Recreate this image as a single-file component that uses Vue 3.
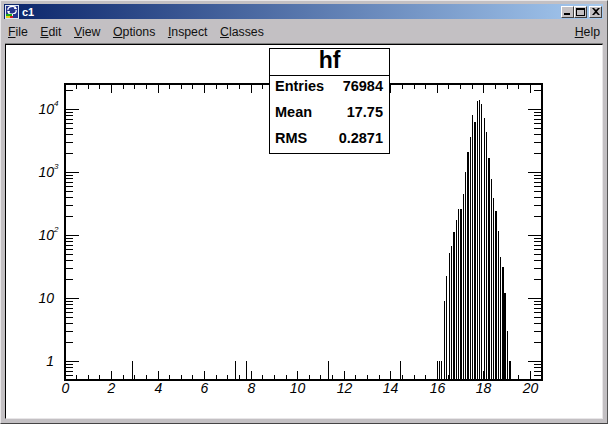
<template>
  <div class="window">
    <div class="titlebar">
      <svg class="appicon" width="14" height="14" viewBox="0 0 14 14">
        <rect width="14" height="14" fill="#dfe6f2" />
        <rect x="1" y="1" width="12" height="8" fill="#24348c" />
        <path d="M3 5a4 3 0 0 1 8-1M11 5a4 3 0 0 1-8 2" fill="none" stroke="#fff" stroke-width="1.3" />
        <path d="M10 1l2 3h-3zM4 9L2 6h3z" fill="#fff" />
        <rect x="1" y="9" width="6" height="2" fill="#18a818" />
        <rect x="1" y="11" width="4" height="2" fill="#e8d020" />
        <rect x="5" y="11" width="3" height="2" fill="#d02020" />
        <rect x="8" y="9" width="5" height="4" fill="#24348c" />
      </svg>
      <span class="wintitle">c1</span>
      <div class="winbuttons">
        <button class="winbtn">
          <svg width="8" height="7" viewBox="0 0 8 7"><rect x="0" y="5" width="6" height="2" fill="#000" /></svg>
        </button>
        <button class="winbtn">
          <svg width="9" height="8" viewBox="0 0 9 8"><path d="M0 0h9v8H0zM1 2v5h7V2z" fill="#000" fill-rule="evenodd" /></svg>
        </button>
        <button class="winbtn closebtn">
          <svg width="8" height="7" viewBox="0 0 8 7"><path d="M0 0h2l2 2 2-2h2L5 3.500 8 7H6L4 5 2 7H0l3-3.500z" fill="#000" /></svg>
        </button>
      </div>
    </div>

    <div class="menubar">
      <span v-for="m in menus" :key="m" class="menuitem"><u>{{ m[0] }}</u>{{ m.slice(1) }}</span>
      <span class="menuitem helpitem"><u>H</u>elp</span>
    </div>

    <div class="canvas">
      <svg class="plot" width="596" height="373" viewBox="6 45 596 373">
        <rect v-for="(b, i) in bars" :key="'b' + i" :x="b.x" :y="b.top" :width="b.w" :height="380 - b.top" fill="#000" />
        <rect v-for="(t, i) in xTicks" :key="'x' + i" :x="t.x" :y="380 - t.len" width="1" :height="t.len" fill="#000" />
        <rect v-for="(t, i) in xTicks" :key="'xt' + i" :x="t.x" y="84" width="1" :height="t.len" fill="#000" />
        <rect v-for="(t, i) in yTicks" :key="'y' + i" x="65" :y="t.y" :width="t.len" height="1" fill="#000" />
        <rect v-for="(t, i) in yTicks" :key="'yr' + i" :x="542 - t.len" :y="t.y" :width="t.len" height="1" fill="#000" />
        <rect x="64" y="83" width="2" height="298" fill="#000" />
        <rect x="541" y="83" width="2" height="298" fill="#000" />
        <rect x="64" y="83" width="479" height="2" fill="#000" />
        <rect x="64" y="379" width="479" height="2" fill="#000" />

        <text v-for="l in xLabels" :key="l.t" :x="l.x" y="393" class="ticklabel" text-anchor="middle">{{ l.t }}</text>
        <text x="54" y="366" class="ticklabel" text-anchor="end">1</text>
        <text x="54" y="303" class="ticklabel" text-anchor="end">10</text>
        <template v-for="l in powLabels" :key="l.exp">
          <text x="54" :y="l.y" class="ticklabel" text-anchor="end">10</text>
          <text x="54" :y="l.y - 8" class="powlabel">{{ l.exp }}</text>
        </template>
      </svg>

      <div class="stats">
        <div class="statstitle">hf</div>
        <div class="statsbody">
          <div v-for="s in stats" :key="s.k" class="statrow">
            <span>{{ s.k }}</span><span>{{ s.v }}</span>
          </div>
        </div>
      </div>
    </div>
  </div>
</template>

<script setup>
const menus = ["File", "Edit", "View", "Options", "Inspect", "Classes"];

const stats = [
  { k: "Entries", v: "76984" },
  { k: "Mean", v: "17.75" },
  { k: "RMS", v: "0.2871" },
];

// x, top, width read off the reference, histogram is not evenly rounded
const bars = [
  [132, 361], [235, 361], [246, 361], [328, 361], [400, 361],
  [437, 361], [439, 361], [441, 361], [444, 301], [446, 276],
  [449, 253], [451, 246], [453, 232, 2], [456, 220], [458, 209],
  [460, 209, 2], [463, 194], [465, 172], [467, 152, 2], [470, 137],
  [472, 115], [474, 122, 2], [477, 101], [479, 100], [481, 104],
  [484, 118], [486, 132], [488, 158, 2], [491, 179], [493, 198],
  [495, 211, 2], [498, 231], [500, 257], [502, 267, 2], [504, 293, 2],
  [507, 331], [509, 361, 2],
].map(([x, top, w]) => ({ x, top, w: w || 1 }));

const xpos = (v) => Math.floor(65 + 23.27 * v);

const xTicks = [];
for (let i = 1; i <= 40; i++) {
  xTicks.push({ x: xpos(i / 2), len: i % 4 === 0 ? 9 : 5 });
}

const xLabels = [0, 2, 4, 6, 8, 10, 12, 14, 16, 18, 20].map((v) => ({
  t: v,
  x: xpos(v) + 0.5,
}));

const yTicks = [];
for (let dec = -1; dec <= 4; dec++) {
  for (let m = 1; m <= 9; m++) {
    const y = Math.round(361 - 63 * (dec + Math.log10(m)));
    if (y < 85 || y > 378) continue;
    yTicks.push({ y, len: m === 1 ? 14 : 8 });
  }
}

const powLabels = [
  { exp: 2, y: 240 },
  { exp: 3, y: 177 },
  { exp: 4, y: 114 },
];
</script>

<style>
body {
  background: #c3c0c3;
}
</style>

<style scoped>
.window {
  width: 608px;
  height: 424px;
  box-sizing: border-box;
  display: flex;
  flex-direction: column;
  background: #c3c0c3;
  padding: 3px 4px 4px 4px;
  border-top: 1px solid #e8e6e8;
  border-left: 1px solid #e8e6e8;
  border-right: 1px solid #555;
  border-bottom: 1px solid #444;
  font-family: "Liberation Sans", Arial, sans-serif;
}
.titlebar {
  height: 15px;
  flex: none;
  display: flex;
  align-items: center;
  background: linear-gradient(to right, #0a246a, #a6caf0);
  margin-left: -1px;
}
.appicon {
  margin-left: 1px;
}
.wintitle {
  margin-left: 3px;
  color: #fff;
  font-weight: bold;
  font-size: 11px;
}
.winbuttons {
  margin-left: auto;
  display: flex;
  margin-right: 1px;
}
.winbtn {
  width: 13px;
  height: 12px;
  padding: 0;
  box-sizing: border-box;
  background: #c3c0c3;
  border: 1px solid;
  border-color: #fff #404040 #404040 #fff;
  display: flex;
  align-items: center;
  justify-content: center;
}
.closebtn {
  margin-left: 2px;
}
.menubar {
  height: 25px;
  flex: none;
  display: flex;
  align-items: center;
  gap: 12.500px;
  padding: 0 3px;
  font-size: 12.300px;
  color: #111;
}
.helpitem {
  margin-left: auto;
}
.canvas {
  flex: 1;
  position: relative;
  background: #fff;
  border-top: 1px solid #000;
  border-left: 1px solid #000;
  border-right: 1px solid #e8e6e8;
  border-bottom: 1px solid #e8e6e8;
  box-shadow: 0 -1px 0 #808080;
  overflow: hidden;
}
.plot {
  display: block;
  shape-rendering: crispEdges;
}
.ticklabel {
  font-family: "Liberation Sans", Arial, sans-serif;
  font-style: italic;
  font-size: 14px;
  fill: #000;
}
.powlabel {
  font-family: "Liberation Sans", Arial, sans-serif;
  font-style: italic;
  font-size: 8px;
  fill: #000;
}
.stats {
  position: absolute;
  left: 263px;
  top: 3px;
  width: 121px;
  height: 106px;
  box-sizing: border-box;
  background: #fff;
  border: 1px solid #000;
  color: #000;
  font-weight: bold;
  display: flex;
  flex-direction: column;
}
.statstitle {
  height: 26px;
  flex: none;
  border-bottom: 1px solid #000;
  text-align: center;
  font-size: 23px;
  line-height: 23px;
}
.statsbody {
  flex: 1;
  display: flex;
  flex-direction: column;
  gap: 6px;
  padding: 0 6px 0 5px;
  font-size: 14.500px;
  line-height: 20px;
}
.statrow {
  display: flex;
  justify-content: space-between;
}
</style>
